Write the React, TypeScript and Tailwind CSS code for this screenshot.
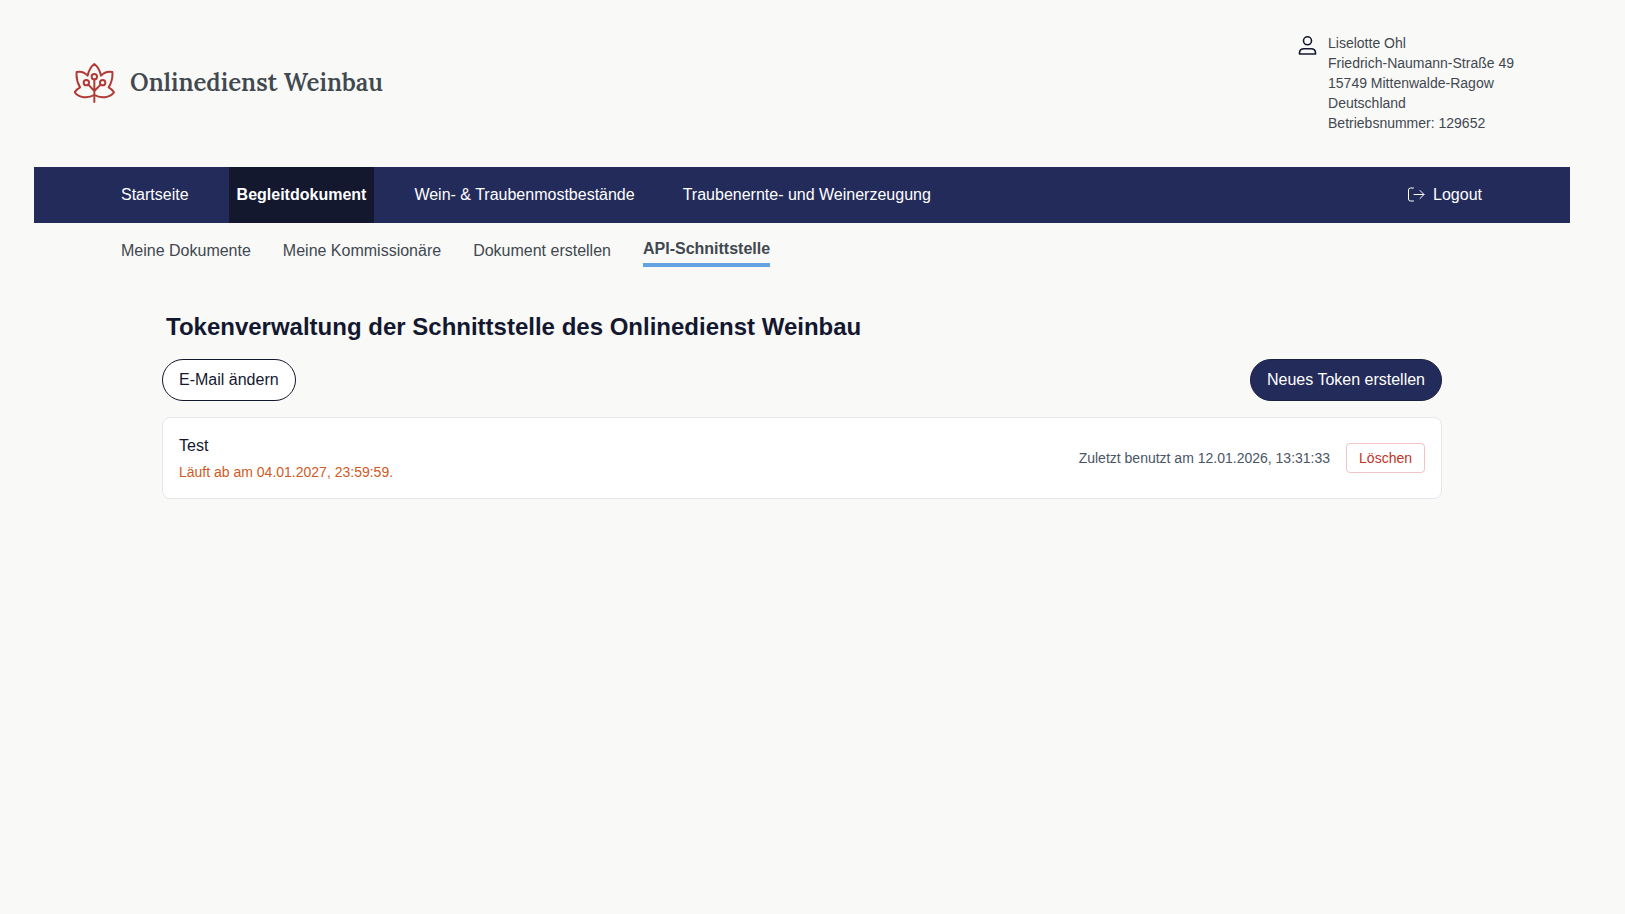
interface NavItem {
  label: string
  active?: boolean
}

const mainNav: NavItem[] = [
  { label: "Startseite" },
  { label: "Begleitdokument", active: true },
  { label: "Wein- & Traubenmostbestände" },
  { label: "Traubenernte- und Weinerzeugung" },
]

const subNav: NavItem[] = [
  { label: "Meine Dokumente" },
  { label: "Meine Kommissionäre" },
  { label: "Dokument erstellen" },
  { label: "API-Schnittstelle", active: true },
]

const address = [
  "Liselotte Ohl",
  "Friedrich-Naumann-Straße 49",
  "15749 Mittenwalde-Ragow",
  "Deutschland",
  "Betriebsnummer: 129652",
]

const tokens = [{ name: "Test", expires: "04.01.2027, 23:59:59", lastUsed: "12.01.2026, 13:31:33" }]

function LeafLogo() {
  return (
    <svg
      viewBox="42 36 126 126"
      className="size-[42px] text-[#b23a35]"
      fill="none"
      stroke="currentColor"
      strokeWidth="6"
      strokeLinecap="round"
      strokeLinejoin="round"
      aria-hidden="true"
    >
      <path d="M103 42C94 49 86 61 83 77C74 67 62 63 50 66C48 83 52 98 60 112C53 116 47 121 44 127C57 144 84 146 103 135C122 146 149 144 162 127C159 121 153 116 146 112C154 98 159 83 157 66C144 63 132 67 123 77C120 61 112 49 103 42Z" />
      <path d="M103 89V156M85 104L103 123L122 104" />
      <circle cx="103" cy="80" r="8" />
      <circle cx="79" cy="98" r="8" />
      <circle cx="128" cy="98" r="8" />
    </svg>
  )
}

function PersonIcon() {
  return (
    <svg
      viewBox="0 0 20 20"
      className="mt-[3px] size-5 text-[#14182f]"
      fill="none"
      stroke="currentColor"
      strokeWidth="1.6"
      strokeLinejoin="round"
      aria-hidden="true"
    >
      <circle cx="9.5" cy="4.8" r="4" />
      <path d="M1.5 18V17C1.5 14.4 3.6 12.8 6.2 12.8H12.8C15.4 12.8 17.5 14.4 17.5 17V18Z" />
    </svg>
  )
}

function LogoutIcon() {
  return (
    <svg
      viewBox="0 0 18 16"
      className="h-4 w-[18px]"
      fill="none"
      stroke="currentColor"
      strokeLinecap="round"
      strokeLinejoin="round"
      aria-hidden="true"
    >
      <path d="M6.5 1H3.5Q1.5 1 1.5 3V12Q1.5 14 3.5 14H6.5" />
      <path d="M7 7.5H17M13 3.5L17 7.5L13 11.5" />
    </svg>
  )
}

export default function App() {
  return (
    <div className="min-h-screen bg-[#f9f9f8] pr-[21px] font-['Liberation_Sans',Arial,sans-serif] text-[#14182f]">
      <div className="mx-auto max-w-[1536px]">
        <header className="flex items-center justify-between pt-[33px] pr-14 pb-[34px] pl-10">
          <a href="#" className="flex items-center gap-3.5">
            <LeafLogo />
            <span className="font-['Lora','Liberation_Serif',serif] text-2xl font-semibold text-[#41484f]">
              Onlinedienst Weinbau
            </span>
          </a>
          <div className="flex items-start gap-2.5">
            <PersonIcon />
            <address className="text-sm leading-5 text-[#41484f] not-italic">
              {address.map((line) => (
                <div key={line}>{line}</div>
              ))}
            </address>
          </div>
        </header>

        <nav className="flex h-14 items-stretch justify-between bg-[#232b5a] pr-20 pl-[79px] text-white">
          <ul className="flex gap-8">
            {mainNav.map(({ label, active }) => (
              <li key={label} className="flex">
                <a
                  href="#"
                  className={`flex items-center px-2 ${active ? "bg-[#14182f] font-bold" : ""}`}
                >
                  {label}
                </a>
              </li>
            ))}
          </ul>
          <button type="button" className="flex items-center gap-2 px-2">
            <LogoutIcon />
            Logout
          </button>
        </nav>

        <nav className="flex items-start gap-8 px-[87px] pt-3.5 text-[#41484f]">
          {subNav.map(({ label, active }) => (
            <a
              key={label}
              href="#"
              className={active ? "border-b-4 border-[#64a3e1] pb-0.5 font-bold" : "py-0.5"}
            >
              {label}
            </a>
          ))}
        </nav>

        <main className="mx-auto max-w-7xl pt-11">
          <h1 className="px-1 text-2xl font-bold">
            Tokenverwaltung der Schnittstelle des Onlinedienst Weinbau
          </h1>
          <div className="mt-4 flex items-center justify-between">
            <button
              type="button"
              className="rounded-full border border-[#14182f] bg-white px-4 py-2"
            >
              E-Mail ändern
            </button>
            <button
              type="button"
              className="rounded-full border border-[#1b2145] bg-[#232b5a] px-4 py-2 text-white"
            >
              Neues Token erstellen
            </button>
          </div>

          <ul className="mt-4 space-y-4">
            {tokens.map((token) => (
              <li
                key={token.name}
                className="flex items-center justify-between rounded-lg border border-gray-200 bg-white p-4"
              >
                <div className="space-y-1">
                  <p>{token.name}</p>
                  <p className="text-sm text-[#cf5a24]">Läuft ab am {token.expires}.</p>
                </div>
                <div className="flex items-center gap-4 text-sm">
                  <span className="text-gray-600">Zuletzt benutzt am {token.lastUsed}</span>
                  <button
                    type="button"
                    className="rounded border border-[#f3c3c6] px-3 py-1 text-[#bf3228]"
                  >
                    Löschen
                  </button>
                </div>
              </li>
            ))}
          </ul>
        </main>
      </div>
    </div>
  )
}
